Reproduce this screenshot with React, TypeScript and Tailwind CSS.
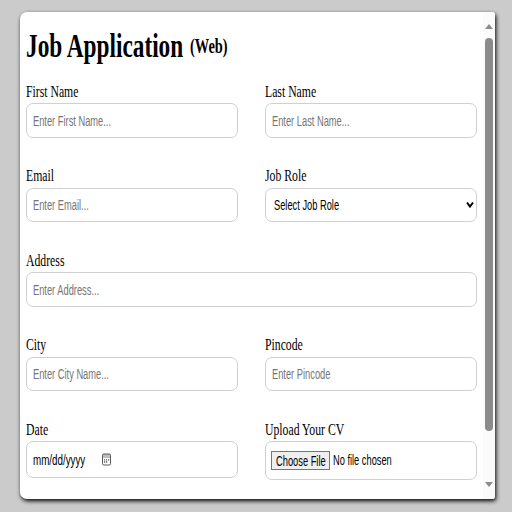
import type { ReactNode } from 'react';

const box =
  'flex items-center rounded-[7px] border border-[#d0d0d0] bg-white font-["Liberation_Sans",Arial,sans-serif] text-[14px] leading-[16px]';

function Label({ children }: { children: ReactNode }) {
  return (
    <div className="h-[19px] whitespace-nowrap text-[17px] leading-[19px]">
      <span className="inline-block origin-left scale-x-[0.69]">{children}</span>
    </div>
  );
}

function Field({ label, hint, wide }: { label: string; hint: string; wide?: boolean }) {
  return (
    <div className={wide ? 'col-span-2' : ''}>
      <Label>{label}</Label>
      <div className={`${box} mt-[2.4px] h-[34.5px] pl-[6px] pt-[0.5px]`}>
        <span className="inline-block origin-left scale-x-[0.664] whitespace-nowrap text-[#757575]">{hint}</span>
      </div>
    </div>
  );
}

export default function App() {
  return (
    <div className='h-[512px] w-[512px] overflow-hidden bg-[#cbcbcb] pl-[20px] pt-[12px] font-["Liberation_Serif","Times_New_Roman",serif] text-black'>
      <div className="flex h-[487px] w-[475px] overflow-hidden rounded-l-[7px] rounded-r-[3px] bg-white shadow-[1px_2px_4px_#000000]">
        <main className="w-[463px] shrink-0 pl-[6px] pr-[6px]">
          <h1 className="mt-[14px] flex h-[40px] items-baseline whitespace-nowrap font-bold">
            <span className="w-[163.5px] text-[33.5px] leading-[40px]">
              <span className="inline-block origin-left scale-x-[0.695]">Job Application</span>
            </span>
            <span className="relative -top-[4px] text-[20px] leading-[24px]">
              <span className="inline-block origin-left scale-x-[0.72]">(Web)</span>
            </span>
          </h1>
          <form className="mt-[16px] grid grid-cols-2 gap-x-[27px] gap-y-[28.55px]">
            <Field label="First Name" hint="Enter First Name..." />
            <Field label="Last Name" hint="Enter Last Name..." />
            <Field label="Email" hint="Enter Email..." />
            <div>
              <Label>Job Role</Label>
              <div className={`${box} mt-[2.4px] h-[34.5px] justify-between pl-[8px] pr-[2px]`}>
                <span className="w-[70px] whitespace-nowrap">
                  <span className="inline-block origin-left scale-x-[0.664]">Select Job Role</span>
                </span>
                <svg width="8" height="8" viewBox="0 0 8 8" fill="none" stroke="#000" strokeWidth="2">
                  <path d="M1 1.5 4 5.5 7 1.5" />
                </svg>
              </div>
            </div>
            <Field label="Address" hint="Enter Address..." wide />
            <Field label="City" hint="Enter City Name..." />
            <Field label="Pincode" hint="Enter Pincode" />
            <div>
              <Label>Date</Label>
              <div className={`${box} mt-[2.4px] h-[36.5px] pl-[6px] pt-[0.5px]`}>
                <span className="w-[69px] whitespace-nowrap">
                  <span className="inline-block origin-left scale-x-[0.7]">mm/dd/yyyy</span>
                </span>
                <svg width="9" height="13" viewBox="0 0 9 13" fill="none" stroke="#5a5a5a">
                  <rect x="0.5" y="1" width="8" height="11" rx="1.2" />
                  <path d="M0.5 2h8M0.5 4h8" strokeWidth="0.8" />
                  <path d="M2 6.8h1.2M4 6.8h1.2M6 6.8h1.2M2 9h1.2M4 9h1.2" strokeWidth="1.3" />
                </svg>
              </div>
            </div>
            <div>
              <Label>Upload Your CV</Label>
              <div className={`${box} mt-[2.4px] h-[38.5px] pl-[5px]`}>
                <span className="h-[19px] w-[59px] overflow-hidden whitespace-nowrap border border-[#767676] bg-[#efefef] pl-[4px] leading-[18px]">
                  <span className="inline-block origin-left scale-x-[0.665]">Choose File</span>
                </span>
                <span className="ml-[3px] inline-block origin-left scale-x-[0.662] whitespace-nowrap">No file chosen</span>
              </div>
            </div>
          </form>
        </main>
        <aside className="flex w-[12px] shrink-0 flex-col items-center bg-[#fbfbfb] pr-[0.5px] pt-[12px]">
          <svg width="8" height="5" viewBox="0 0 8 5" fill="#8b8b8b">
            <path d="M4 0 8 5H0z" />
          </svg>
          <div className="mt-[9px] h-[393px] w-[7.5px] rounded-full bg-[#8b8b8b]" />
          <svg className="mt-[51px] shrink-0" width="8" height="5" viewBox="0 0 8 5" fill="#8b8b8b">
            <path d="M0 0h8L4 5z" />
          </svg>
        </aside>
      </div>
    </div>
  );
}
